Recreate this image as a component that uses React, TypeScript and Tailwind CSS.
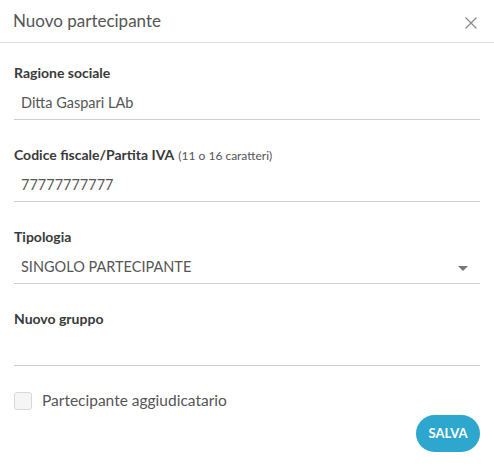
import { useState } from 'react'

type FieldProps = {
  label: string
  hint?: string
  value?: string
  select?: boolean
}

function Field({ label, hint, value, select }: FieldProps) {
  return (
    <div className="mb-[24px]">
      <div className="flex h-[22px] items-baseline text-[14px] leading-[22px] font-bold text-[#3a3a3a]">
        {label}
        {hint ? <span className="ml-[4px] text-[12px] font-normal text-[#555]">{hint}</span> : null}
      </div>
      <div className="flex h-[36px] items-center border-b border-[#cfcfcf] pl-[7px] pr-[12px] pt-[3px] text-[14.5px] text-[#555]">
        <span className="flex-1">{value}</span>
        {select ? (
          <svg width="10" height="5" viewBox="0 0 10 5" className="mt-[3px]">
            <path d="M0 0h10L5 5z" fill="#777" />
          </svg>
        ) : null}
      </div>
    </div>
  )
}

export default function App() {
  const [winner, setWinner] = useState(false)

  return (
    <div className="h-[474px] w-[494px] bg-white font-['Lato',sans-serif]">
      <div className="flex h-[43px] items-center justify-between border-b border-[#dcdcdc] pl-[13px] pr-[17px]">
        <h1 className="text-[17px] text-[#555]">Nuovo partecipante</h1>
        <svg width="12" height="12" viewBox="0 0 12 12" className="mt-[3px]">
          <path d="M0.5 0.5l11 11M11.5 0.5l-11 11" stroke="#8a8a8a" strokeWidth="1.2" />
        </svg>
      </div>

      <div className="px-[14px] pt-[19px]">
        <Field label="Ragione sociale" value="Ditta Gaspari LAb" />
        <Field label="Codice fiscale/Partita IVA" hint="(11 o 16 caratteri)" value="77777777777" />
        <Field label="Tipologia" value="SINGOLO PARTECIPANTE" select />
        <Field label="Nuovo gruppo" />

        <label className="flex h-[22px] cursor-pointer items-center gap-[10px] text-[15.5px] text-[#555]">
          <span
            onClick={() => setWinner(!winner)}
            className="h-[18px] w-[18px] rounded-[3px] border border-[#d8d8d8] bg-[#f5f5f5]"
          />
          Partecipante aggiudicatario
        </label>

        <div className="mt-[3px] flex justify-end">
          <button className="h-[37px] w-[64px] rounded-full bg-[#2ea7cf] text-[13px] font-bold text-white">
            SALVA
          </button>
        </div>
      </div>
    </div>
  )
}
